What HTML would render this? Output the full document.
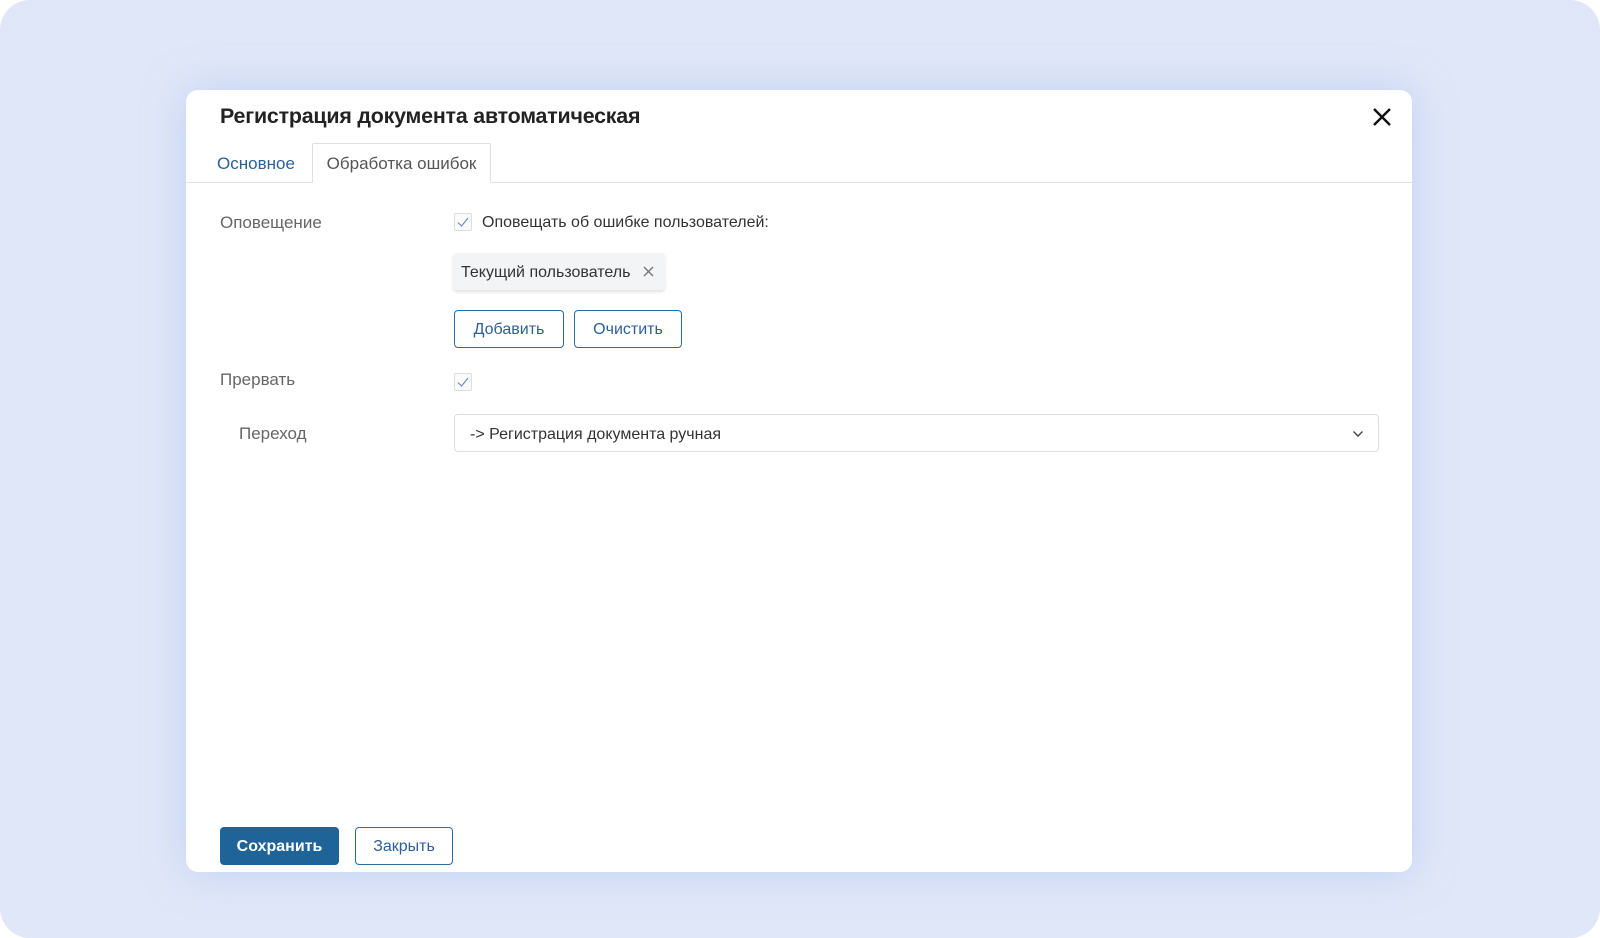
<!DOCTYPE html>
<html><head><meta charset="utf-8"><style>
html,body{margin:0;padding:0;background:#fff;}
body{width:1600px;height:938px;position:relative;overflow:hidden;font-family:"Liberation Sans",sans-serif;}
.bg{position:absolute;left:0;top:0;width:1600px;height:938px;background:#e0e7f8;border-radius:30px;}
.card{position:absolute;left:186px;top:90px;width:1226px;height:782px;background:#fff;border-radius:12px;box-shadow:0 0 40px rgba(170,195,240,.6);}
.t{position:absolute;white-space:nowrap;}
.title{left:34px;top:14px;font-size:21.4px;color:#222;font-weight:bold;letter-spacing:-0.2px;}
.close{position:absolute;left:1186px;top:17px;}
.divider{position:absolute;left:0;right:0;top:92px;height:1px;background:#e2e2e2;}
.tab1{left:31px;top:64px;font-size:17px;color:#2d5f98;}
.tab2{position:absolute;left:126px;top:53px;width:179px;height:40px;border:1px solid #e0e0e0;border-bottom:none;background:#fff;box-sizing:border-box;font-size:17px;color:#555;text-align:center;line-height:40px;border-radius:2px 2px 0 0;}
.lbl{font-size:17px;color:#666;}
.cb{position:absolute;width:18px;height:18px;border:1px solid #ddd;border-radius:2px;box-sizing:border-box;background:#fafafa;}
.chip{position:absolute;left:267px;top:163px;width:212px;height:37px;background:#f3f4f5;border-radius:4px;box-shadow:0 2px 3px rgba(0,0,0,.12);font-size:16px;color:#333;line-height:39px;box-sizing:border-box;padding-left:8px;}
.btn{position:absolute;height:38px;border:1.5px solid #2d6a9c;border-radius:4px;box-sizing:border-box;color:#2d5f98;font-size:16px;text-align:center;line-height:38px;background:#fff;}
.sel{position:absolute;left:268px;top:324px;width:925px;height:38px;border:1px solid #ddd;border-radius:4px;box-sizing:border-box;font-size:16px;color:#333;line-height:39px;padding-left:15px;}
</style></head><body>
<div class="bg"></div>
<div class="card">
<div class="t title">Регистрация документа автоматическая</div>
<svg class="close" width="20" height="20" viewBox="0 0 20 20"><path d="M2 2L18 18M18 2L2 18" stroke="#111" stroke-width="2.4" fill="none"/></svg>
<div class="divider"></div>
<div class="t tab1">Основное</div>
<div class="tab2">Обработка ошибок</div>
<div class="t lbl" style="left:34px;top:123px;">Оповещение</div>
<div class="cb" style="left:268px;top:123px;"><svg width="16" height="16" viewBox="0 0 16 16"><path d="M3 8.5L6.5 12L13 4" stroke="#6c8fb8" stroke-width="1.2" fill="none"/></svg></div>
<div class="t" style="left:296px;top:124px;font-size:16px;color:#333;">Оповещать об ошибке пользователей:</div>
<div class="chip">Текущий пользователь<svg style="position:absolute;left:190px;top:13px" width="11" height="11" viewBox="0 0 11 11"><path d="M1 1L10 10M10 1L1 10" stroke="#777" stroke-width="1.4"/></svg></div>
<div class="btn" style="left:268px;top:220px;width:110px;">Добавить</div>
<div class="btn" style="left:388px;top:220px;width:108px;">Очистить</div>
<div class="t lbl" style="left:34px;top:280px;">Прервать</div>
<div class="cb" style="left:268px;top:283px;"><svg width="16" height="16" viewBox="0 0 16 16"><path d="M3 8.5L6.5 12L13 4" stroke="#6c8fb8" stroke-width="1.2" fill="none"/></svg></div>
<div class="t lbl" style="left:53px;top:334px;">Переход</div>
<div class="sel">-&gt; Регистрация документа ручная<svg style="position:absolute;right:14px;top:15px" width="12" height="8" viewBox="0 0 12 8"><path d="M1.5 1.5L6 6L10.5 1.5" stroke="#444" stroke-width="1.4" fill="none"/></svg></div>
<div class="btn" style="left:34px;top:737px;width:119px;background:#1f6498;border-color:#1f6498;color:#fff;font-weight:bold;">Сохранить</div>
<div class="btn" style="left:169px;top:737px;width:98px;">Закрыть</div>
</div>
</body></html>
